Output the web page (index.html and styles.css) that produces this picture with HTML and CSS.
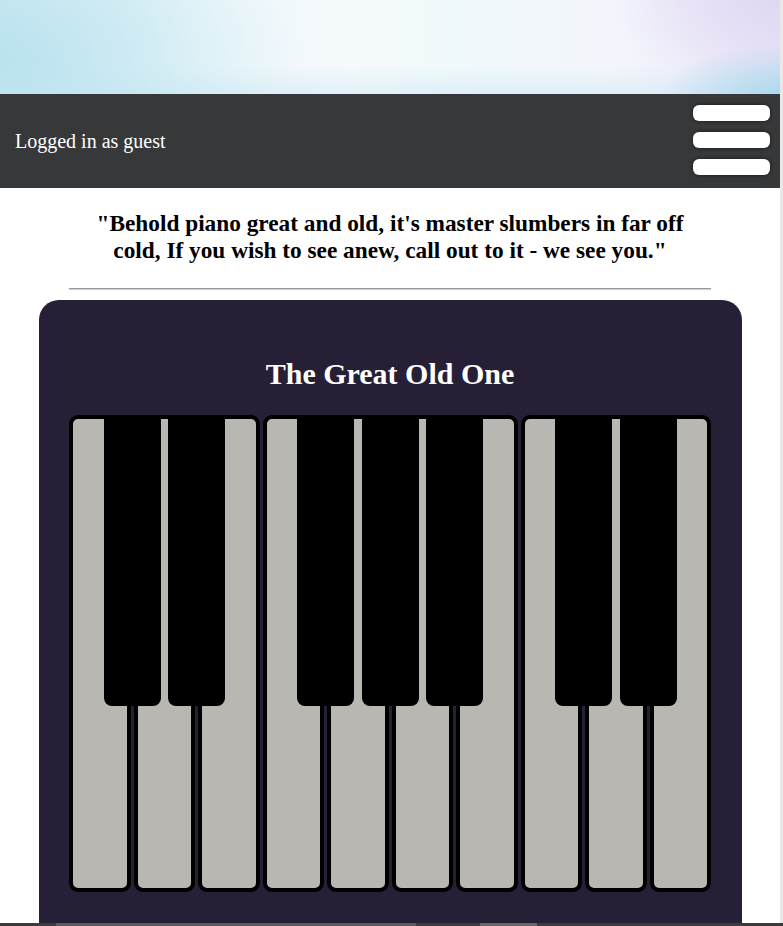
FILE: index.html
```html
<!DOCTYPE html>
<html lang="en">
<head>
<meta charset="utf-8">
<title>The Great Old One</title>
<link rel="stylesheet" href="styles.css">
</head>
<body>
<div class="banner"></div>
<header class="topbar">
  <span class="user">Logged in as guest</span>
  <button class="menu" aria-label="Menu"><span></span><span></span><span></span></button>
</header>
<main class="content">
  <p class="quote">"Behold piano great and old, it's master slumbers in far off cold, If you wish to see anew, call out to it - we see you."</p>
  <hr class="divider">
  <section class="card">
    <h1 class="title">The Great Old One</h1>
    <div class="keyboard">
      <div class="white"><div class="black"></div></div>
      <div class="white"><div class="black"></div></div>
      <div class="white"></div>
      <div class="white"><div class="black"></div></div>
      <div class="white"><div class="black"></div></div>
      <div class="white"><div class="black"></div></div>
      <div class="white"></div>
      <div class="white"><div class="black"></div></div>
      <div class="white"><div class="black"></div></div>
      <div class="white"></div>
    </div>
  </section>
</main>
<div class="bottom-strip"><span class="seg seg-a"></span><span class="seg seg-b"></span></div>
</body>
</html>
```
FILE: styles.css
```css
html {
  background: #e9e9e9;
  height: 100%;
  overflow: hidden;
}
body {
  margin: 0 3px 0 0;
  min-height: 100%;
  background: #fff;
  font-family: "Liberation Serif", "Times New Roman", serif;
}
.banner {
  height: 94px;
  background:
    radial-gradient(ellipse 120px 50px at 780px 94px, rgba(160, 214, 236, 0.8), rgba(160, 214, 236, 0)),
    radial-gradient(ellipse 170px 90px at 775px 0, rgba(224, 214, 243, 0.9), rgba(224, 214, 243, 0)),
    radial-gradient(ellipse 300px 160px at 0 60px, rgba(180, 224, 238, 0.8), rgba(180, 224, 238, 0)),
    linear-gradient(to bottom, rgba(255, 255, 255, 0) 70%, rgba(205, 232, 244, 0.5)),
    linear-gradient(to right, #d2ecf4, #ecf7fa 25%, #f5f9fc 45%, #f0f9fb 60%, #f3f5fc 80%, #e9e5f6);
}
.topbar {
  height: 94px;
  background: #37383a;
  display: flex;
  align-items: center;
  justify-content: space-between;
  padding: 0 10px 0 15px;
}
.user {
  color: #fff;
  font-size: 20px;
}
.menu {
  display: flex;
  flex-direction: column;
  gap: 11px;
  background: none;
  border: 0;
  padding: 0;
  margin-top: -2px;
}
.menu span {
  display: block;
  width: 77px;
  height: 16px;
  background: #fff;
  border-radius: 6px;
  box-shadow: 0 0 4px rgba(0, 0, 0, 0.6);
}
.content {
  padding-top: 22px;
}
.quote {
  margin: 0 auto;
  max-width: 620px;
  text-align: center;
  font-weight: bold;
  font-size: 23.3px;
  line-height: 27px;
  color: #000;
}
.divider {
  width: 642px;
  margin: 24px auto 10px;
  border: 0;
  border-top: 1px solid #9a9a9a;
  border-bottom: 1px solid #cfcfcf;
}
.card {
  width: 703px;
  margin: 0 auto;
  box-sizing: border-box;
  background: #271f35;
  border-radius: 20px 20px 0 0;
  padding: 54px 30.5px 80px;
}
.title {
  margin: 0 0 22px;
  text-align: center;
  color: #fff;
  font-size: 30px;
  line-height: 39px;
  font-weight: bold;
}
.keyboard {
  display: flex;
  gap: 3px;
  height: 477px;
}
.white {
  flex: 1;
  position: relative;
  background: #b8b7b2;
  border: 4px solid #000;
  border-radius: 9px;
}
.black {
  position: absolute;
  top: -4px;
  right: -34px;
  width: 57px;
  height: 291px;
  background: #000;
  border-radius: 0 0 8px 8px;
  z-index: 1;
}
.bottom-strip {
  position: fixed;
  left: 0;
  right: 0;
  bottom: 0;
  height: 3px;
  background: #3b3b3d;
}
.seg {
  position: absolute;
  top: 0;
  height: 3px;
}
.seg-a {
  left: 56px;
  width: 360px;
  background: #5a5a5c;
}
.seg-b {
  left: 480px;
  width: 57px;
  background: #666;
}
```
